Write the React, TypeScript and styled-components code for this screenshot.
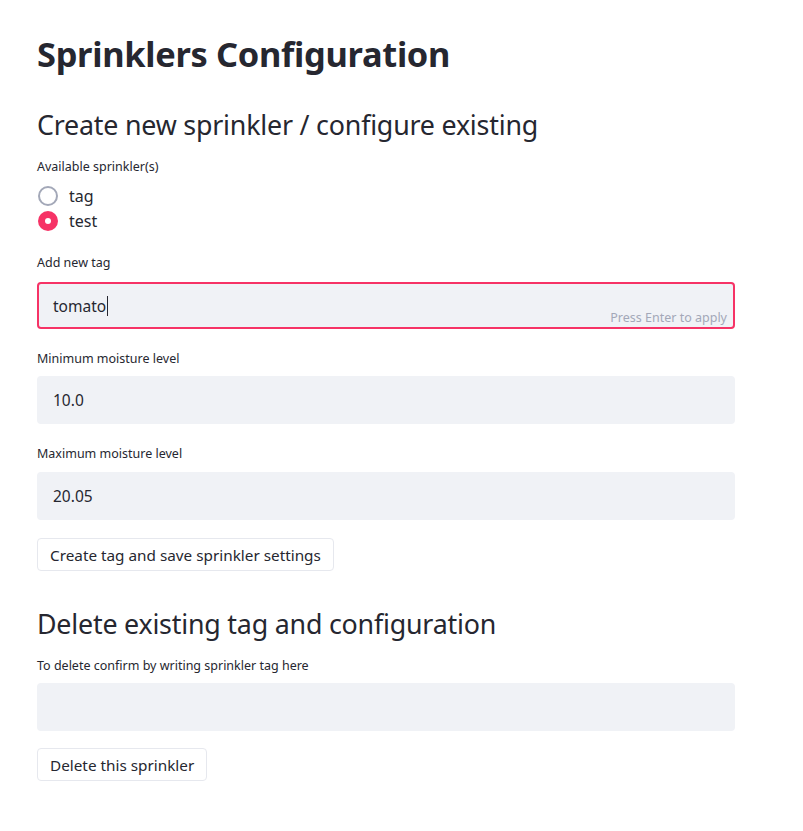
import React from "react";
import styled, { createGlobalStyle } from "styled-components";

const Global = createGlobalStyle`
  html, body { margin: 0; padding: 0; background: #ffffff; }
  body { font-family: "Noto Sans", "Open Sans", sans-serif; color: #262730; }
  * { box-sizing: border-box; }
`;

const Page = styled.div`
  width: 698px;
  margin-left: 37px;
  padding-top: 30px;
  display: flex;
  flex-direction: column;
`;

const Title = styled.h1`
  margin: 0;
  font-family: "Noto Sans", sans-serif;
  font-weight: 700;
  font-size: 34.4px;
  line-height: 48px;
  letter-spacing: -0.3px;
  color: #262730;
`;

const Heading = styled.h2<{ $top: number }>`
  margin: ${(p) => p.$top}px 0 0 0;
  font-family: "Noto Sans", sans-serif;
  font-weight: 400;
  font-size: 26.8px;
  line-height: 40px;
  letter-spacing: -0.2px;
  color: #262730;
`;

const Label = styled.div<{ $top: number }>`
  margin-top: ${(p) => p.$top}px;
  font-size: 12.5px;
  line-height: 18px;
  color: #262730;
`;

const RadioGroup = styled.div`
  margin-top: 10px;
  display: flex;
  flex-direction: column;
  gap: 5px;
`;

const RadioRow = styled.div`
  display: flex;
  align-items: center;
  gap: 11px;
  height: 20px;
  padding-left: 1px;
  font-size: 16px;
`;

const RadioDot = styled.span<{ $on: boolean }>`
  width: 20px;
  height: 20px;
  border-radius: 50%;
  flex: none;
  display: flex;
  align-items: center;
  justify-content: center;
  border: ${(p) => (p.$on ? "none" : "2px solid #a3a8b8")};
  background: ${(p) => (p.$on ? "#f63366" : "#ffffff")};
  &::after {
    content: "";
    display: ${(p) => (p.$on ? "block" : "none")};
    width: 6px;
    height: 6px;
    border-radius: 50%;
    background: #ffffff;
  }
`;

const InputBox = styled.div<{ $focus?: boolean; $top: number }>`
  margin-top: ${(p) => p.$top}px;
  position: relative;
  height: ${(p) => (p.$focus ? 47 : 48)}px;
  border-radius: 4px;
  background: #f0f2f6;
  border: 2px solid ${(p) => (p.$focus ? "#f63366" : "#f0f2f6")};
  display: flex;
  align-items: center;
  padding-left: 14px;
  font-size: 15.5px;
  color: #262730;
`;

const Caret = styled.span`
  display: inline-block;
  width: 1px;
  height: 20px;
  background: #262730;
  margin-left: 1px;
`;

const Hint = styled.span`
  position: absolute;
  right: 6px;
  bottom: 1px;
  font-size: 12.5px;
  color: #a3a8b8;
`;

const Button = styled.button<{ $top: number }>`
  margin-top: ${(p) => p.$top}px;
  align-self: flex-start;
  height: 33px;
  padding: 0 12px;
  background: #ffffff;
  border: 1px solid #e6e8ee;
  border-radius: 4px;
  font-family: "Noto Sans", sans-serif;
  font-size: 15.3px;
  color: #262730;
`;

export default function App() {
  return (
    <>
      <Global />
      <Page>
        <Title>Sprinklers Configuration</Title>
        <Heading $top={27}>Create new sprinkler / configure existing</Heading>
        <Label $top={13}>Available sprinkler(s)</Label>
        <RadioGroup>
          <RadioRow>
            <RadioDot $on={false} />
            tag
          </RadioRow>
          <RadioRow>
            <RadioDot $on={true} />
            test
          </RadioRow>
        </RadioGroup>
        <Label $top={23}>Add new tag</Label>
        <InputBox $focus $top={10}>
          tomato
          <Caret />
          <Hint>Press Enter to apply</Hint>
        </InputBox>
        <Label $top={21}>Minimum moisture level</Label>
        <InputBox $top={8}>10.0</InputBox>
        <Label $top={21}>Maximum moisture level</Label>
        <InputBox $top={9}>20.05</InputBox>
        <Button $top={18}>Create tag and save sprinkler settings</Button>
        <Heading $top={33}>Delete existing tag and configuration</Heading>
        <Label $top={13}>To delete confirm by writing sprinkler tag here</Label>
        <InputBox $top={8} />
        <Button $top={17}>Delete this sprinkler</Button>
      </Page>
    </>
  );
}
